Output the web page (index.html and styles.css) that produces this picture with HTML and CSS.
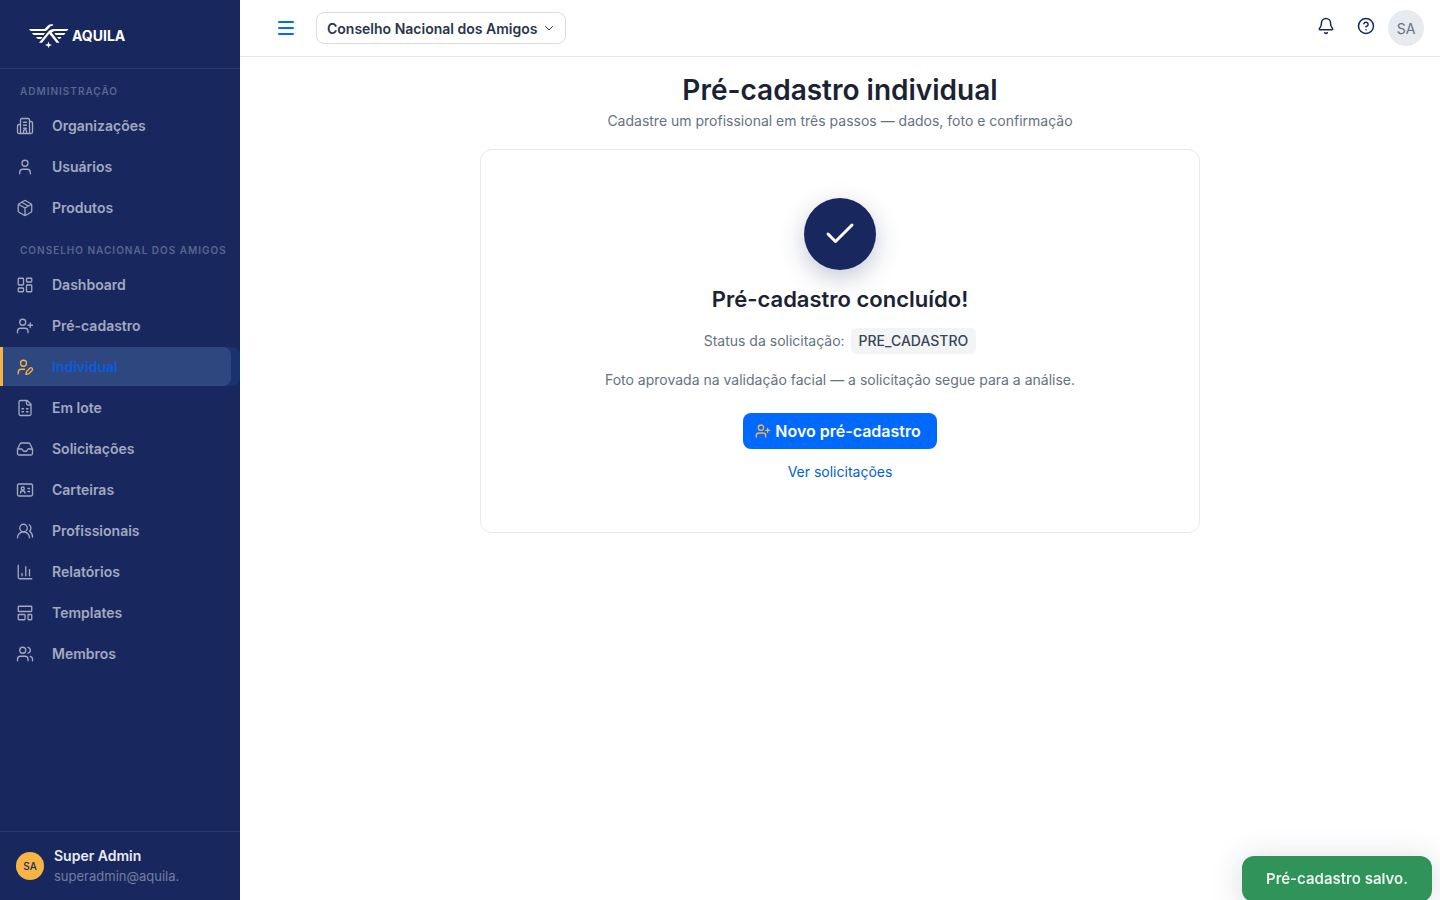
FILE: index.html
```
<!DOCTYPE html>
<html lang="pt-BR">
<head>
  <meta charset="UTF-8">
  <meta name="viewport" content="width=device-width, initial-scale=1.0">
  <title>Pré-cadastro individual - Aquila</title>
  <link rel="stylesheet" href="styles.css">
</head>
<body>
  <aside class="sidebar">
    <a class="brand" href="#">
      <svg class="brand-mark" viewBox="0 0 40 24" fill="currentColor" aria-hidden="true">
        <path d="M0 5h15.500L19 1.500Q20.500.2 22.500.2h1.800l-1 1.800h-1.500l-3.500 4-1.500 1H2Q.8 6.600 0 5z"/>
        <path d="M39.500 5H25q-3 0-5 1.800L10 18.800h3l7.300-9 7.200 9h3L22.600 8.600Q24 7 26 7h11.500q1.200-.4 2-2z"/>
        <path d="M3 9h13l-1.500 2H5Q3.600 10.600 3 9zM36.500 9H25.300l1.500 2h7.700q1.400-.4 2-2zM7 13h6.500L12 15H9q-1.400-.4-2-2zM32.500 13h-4.300l1.500 2h.8q1.400-.4 2-2z"/>
        <path d="M19.500 17.500l.9 2.600 2.600.9-2.600.9-.9 2.100-.9-2.100L16 21l2.600-.9z"/>
      </svg>
      <span class="brand-name">AQUILA</span>
    </a>

    <nav class="menu">
      <h2 class="menu-title">Administração</h2>
      <a class="menu-item" href="#">
        <svg class="icon" viewBox="0 0 24 24"><path d="M6 22V4a2 2 0 0 1 2-2h8a2 2 0 0 1 2 2v18M6 10H4a2 2 0 0 0-2 2v8a2 2 0 0 0 2 2h16a2 2 0 0 0 2-2V8a2 2 0 0 0-2-2h-2M10 22v-3a2 2 0 0 1 4 0v3M10 7h4M10 11h4M10 15h4"/></svg>
        <span>Organizações</span>
      </a>
      <a class="menu-item" href="#">
        <svg class="icon" viewBox="0 0 24 24"><circle cx="12" cy="7" r="4"/><path d="M19 21v-2a4 4 0 0 0-4-4H9a4 4 0 0 0-4 4v2"/></svg>
        <span>Usuários</span>
      </a>
      <a class="menu-item" href="#">
        <svg class="icon" viewBox="0 0 24 24"><path d="M11 21.700a2 2 0 0 0 2 0l7-4a2 2 0 0 0 1-1.700V8a2 2 0 0 0-1-1.700l-7-4a2 2 0 0 0-2 0l-7 4A2 2 0 0 0 3 8v8a2 2 0 0 0 1 1.700zM12 22V12M3.300 7l8.700 5 8.700-5M7.500 4.300l9 5.100"/></svg>
        <span>Produtos</span>
      </a>

      <h2 class="menu-title">Conselho Nacional dos Amigos</h2>
      <a class="menu-item" href="#">
        <svg class="icon" viewBox="0 0 24 24"><rect x="3" y="3" width="7" height="9" rx="1"/><rect x="14" y="3" width="7" height="5" rx="1"/><rect x="14" y="12" width="7" height="9" rx="1"/><rect x="3" y="16" width="7" height="5" rx="1"/></svg>
        <span>Dashboard</span>
      </a>
      <a class="menu-item" href="#">
        <svg class="icon" viewBox="0 0 24 24"><circle cx="9" cy="7" r="4"/><path d="M16 21v-2a4 4 0 0 0-4-4H6a4 4 0 0 0-4 4v2M19 8v6M22 11h-6"/></svg>
        <span>Pré-cadastro</span>
        <svg class="icon chevron" viewBox="0 0 24 24"><path d="M6 9l6 6 6-6"/></svg>
      </a>
      <div class="menu-active">
        <a class="menu-item active" href="#" aria-current="page">
          <svg class="icon" viewBox="0 0 24 24"><circle cx="10" cy="7" r="4"/><path d="M11.500 15H7a4 4 0 0 0-4 4v2M21.400 16.600a1 1 0 0 0-3-3l-4 4a2 2 0 0 0-.5.900l-.8 2.800a.5.5 0 0 0 .6.600l2.800-.8a2 2 0 0 0 .9-.5z"/></svg>
          <span>Individual</span>
        </a>
      </div>
      <a class="menu-item" href="#">
        <svg class="icon" viewBox="0 0 24 24"><path d="M15 2H6a2 2 0 0 0-2 2v16a2 2 0 0 0 2 2h12a2 2 0 0 0 2-2V7zM14 2v4a2 2 0 0 0 2 2h4M8 13h2M14 13h2M8 17h2M14 17h2"/></svg>
        <span>Em lote</span>
      </a>
      <a class="menu-item" href="#">
        <svg class="icon" viewBox="0 0 24 24"><path d="M22 12h-6l-2 3h-4l-2-3H2M5.500 5.100L2 12v6a2 2 0 0 0 2 2h16a2 2 0 0 0 2-2v-6l-3.500-6.900A2 2 0 0 0 16.800 4H7.200a2 2 0 0 0-1.700 1.100z"/></svg>
        <span>Solicitações</span>
      </a>
      <a class="menu-item" href="#">
        <svg class="icon" viewBox="0 0 24 24"><rect x="2" y="4" width="20" height="16" rx="2"/><circle cx="9" cy="10" r="2"/><path d="M16 10h2M16 14h2M6 16a3 3 0 0 1 6 0"/></svg>
        <span>Carteiras</span>
      </a>
      <a class="menu-item" href="#">
        <svg class="icon" viewBox="0 0 24 24"><path d="M18 21a8 8 0 0 0-16 0M22 20c0-3.400-2-6.500-4-8a5 5 0 0 0-.500-8.300"/><circle cx="10" cy="8" r="5"/></svg>
        <span>Profissionais</span>
      </a>
      <a class="menu-item" href="#">
        <svg class="icon" viewBox="0 0 24 24"><path d="M3 3v16a2 2 0 0 0 2 2h16M18 17V9M13 17V5M8 17v-3"/></svg>
        <span>Relatórios</span>
      </a>
      <a class="menu-item" href="#">
        <svg class="icon" viewBox="0 0 24 24"><rect x="3" y="3" width="18" height="7" rx="1"/><rect x="3" y="14" width="9" height="7" rx="1"/><rect x="16" y="14" width="5" height="7" rx="1"/></svg>
        <span>Templates</span>
      </a>
      <a class="menu-item" href="#">
        <svg class="icon" viewBox="0 0 24 24"><circle cx="9" cy="7" r="4"/><path d="M16 21v-2a4 4 0 0 0-4-4H6a4 4 0 0 0-4 4v2M22 21v-2a4 4 0 0 0-3-3.900M16 3.100a4 4 0 0 1 0 7.800"/></svg>
        <span>Membros</span>
      </a>
    </nav>

    <div class="account">
      <span class="account-avatar">SA</span>
      <div class="account-info">
        <strong class="account-name">Super Admin</strong>
        <span class="account-mail">superadmin@aquila.</span>
      </div>
    </div>
  </aside>

  <div class="page">
    <header class="topbar">
      <button class="icon-button toggle" type="button" aria-label="Alternar menu">
        <svg class="icon" viewBox="0 0 18 18"><path d="M2 3h14M2 9h14M2 15h14"/></svg>
      </button>
      <button class="org-button" type="button">
        Conselho Nacional dos Amigos
        <svg class="icon" viewBox="0 0 24 24"><path d="M5 9l7 7 7-7"/></svg>
      </button>
      <div class="topbar-actions">
        <button class="icon-button" type="button" aria-label="Notificações">
          <svg class="icon" viewBox="0 0 24 24"><path d="M10.300 21a2 2 0 0 0 3.400 0M3.300 15.300A1 1 0 0 0 4 17h16a1 1 0 0 0 .700-1.700C19.400 14 18 12.500 18 8A6 6 0 0 0 6 8c0 4.500-1.400 6-2.700 7.300z"/></svg>
        </button>
        <button class="icon-button" type="button" aria-label="Ajuda">
          <svg class="icon" viewBox="0 0 24 24"><circle cx="12" cy="12" r="10"/><path d="M9.100 9a3 3 0 0 1 5.800 1c0 2-3 3-3 3M12 17h.01"/></svg>
        </button>
        <button class="user-button" type="button">SA</button>
      </div>
    </header>

    <main class="content">
      <h1>Pré-cadastro individual</h1>
      <p class="subtitle">Cadastre um profissional em três passos — dados, foto e confirmação</p>

      <section class="card">
        <div class="success">
          <svg class="icon" viewBox="0 0 24 24"><path d="M20 6L9 17l-5-5"/></svg>
        </div>
        <h2>Pré-cadastro concluído!</h2>
        <p class="status">Status da solicitação: <span class="tag">PRE_CADASTRO</span></p>
        <p class="message">Foto aprovada na validação facial — a solicitação segue para a análise.</p>
        <button class="primary" type="button">
          <svg class="icon" viewBox="0 0 24 24"><circle cx="9" cy="7" r="4"/><path d="M16 21v-2a4 4 0 0 0-4-4H6a4 4 0 0 0-4 4v2M19 8v6M22 11h-6"/></svg>
          Novo pré-cadastro
        </button>
        <a class="link" href="#">Ver solicitações</a>
      </section>
    </main>
  </div>

  <div class="toast" role="status">Pré-cadastro salvo.</div>
</body>
</html>
```
FILE: styles.css
```
* {
  box-sizing: border-box;
}

body {
  margin: 0;
  min-height: 100vh;
  display: flex;
  font-family: Inter, "Open Sans", sans-serif;
  font-size: 14px;
  line-height: 20px;
  color: #1a2233;
  background-color: #fff;
}

h1, h2, p {
  margin: 0;
}

a {
  text-decoration: none;
}

button {
  font-family: inherit;
  cursor: pointer;
}

.icon {
  width: 18px;
  height: 18px;
  flex: none;
  fill: none;
  stroke: currentColor;
  stroke-width: 1.75;
  stroke-linecap: round;
  stroke-linejoin: round;
}

/* Menu lateral */
.sidebar {
  width: 240px;
  flex: none;
  min-height: 100vh;
  display: flex;
  flex-direction: column;
  background-color: #18285f;
}

.brand {
  height: 69px;
  display: flex;
  align-items: center;
  gap: 3px;
  padding: 3px 29px 0;
  color: #fff;
  border-bottom: 1px solid #293970;
}

.brand-mark {
  width: 40px;
  height: 24px;
}

.brand-name {
  font-size: 14px;
  font-weight: 700;
}

.menu {
  flex: 1;
  padding-top: 12px;
}

.menu-title {
  padding: 0 20px;
  margin-bottom: 5px;
  font-size: 10px;
  line-height: 20px;
  font-weight: 600;
  letter-spacing: 1px;
  text-transform: uppercase;
  white-space: nowrap;
  color: #58658f;
}

.menu-item + .menu-title {
  margin-top: 13px;
}

.menu-item {
  height: 39px;
  display: flex;
  align-items: center;
  gap: 18px;
  margin-bottom: 2px;
  padding: 0 13px 0 16px;
  font-weight: 600;
  color: #a3a9bf;
}

.chevron {
  width: 14px;
  height: 14px;
  margin-left: auto;
  color: #182c50;
}

.menu-active {
  margin-bottom: 2px;
  border-radius: 0 8px 8px 0;
  background-color: #1a3370;
}

.menu-item.active {
  margin: 0 9px 0 0;
  padding-left: 13px;
  border-left: 3px solid #f5b546;
  border-radius: 0 8px 8px 0;
  background-color: #2f477f;
  color: #0b5bdb;
}

.active .icon {
  color: #f5b546;
}

.account {
  height: 69px;
  display: flex;
  align-items: center;
  gap: 10px;
  padding: 0 16px;
  border-top: 1px solid #293970;
}

.account-avatar {
  width: 28px;
  height: 28px;
  display: flex;
  align-items: center;
  justify-content: center;
  border-radius: 50%;
  font-size: 10px;
  font-weight: 500;
  color: #18285f;
  background-color: #f5b546;
}

.account-info {
  display: flex;
  flex-direction: column;
}

.account-name {
  font-weight: 600;
  color: #e8eaef;
}

.account-mail {
  font-size: 13px;
  color: #747e9f;
}

/* Barra superior */
.page {
  flex: 1;
  min-width: 0;
}

.topbar {
  height: 57px;
  display: flex;
  align-items: center;
  padding: 0 16px 0 32px;
  border-bottom: 1px solid #e4e5e9;
}

.icon-button {
  width: 28px;
  height: 28px;
  display: flex;
  align-items: center;
  justify-content: center;
  padding: 0;
  border: none;
  background: none;
  color: #18285f;
}

.toggle {
  color: #0069ff;
}

.toggle .icon,
.topbar-actions .icon {
  stroke-width: 2;
}

.org-button {
  height: 32px;
  display: flex;
  align-items: center;
  gap: 6px;
  margin-left: 16px;
  padding: 0 10px;
  border: 1px solid #d9dce2;
  border-radius: 8px;
  font-size: 14px;
  font-weight: 600;
  color: #29364a;
  background-color: #fff;
}

.org-button .icon {
  width: 12px;
  height: 12px;
  stroke-width: 2;
}

.topbar-actions {
  display: flex;
  align-items: center;
  gap: 12px;
  margin-left: auto;
}

.topbar-actions .icon-button {
  padding-bottom: 4px;
}

.user-button {
  width: 36px;
  height: 36px;
  margin-left: -4px;
  padding: 0;
  border: none;
  border-radius: 50%;
  font-size: 14px;
  color: #65717e;
  background-color: #e7eaee;
}

/* Conteúdo */
.content {
  max-width: 720px;
  margin: 0 auto;
  padding-top: 16px;
  text-align: center;
}

h1 {
  font-size: 28px;
  line-height: 34px;
  font-weight: 600;
}

.subtitle {
  margin-top: 4px;
  color: #667280;
}

.card {
  display: flex;
  flex-direction: column;
  align-items: center;
  margin-top: 18px;
  padding: 48px 24px 50px;
  border: 1px solid #e7e9ed;
  border-radius: 12px;
}

.success {
  width: 72px;
  height: 72px;
  display: flex;
  align-items: center;
  justify-content: center;
  border-radius: 50%;
  color: #fff;
  background-color: #18285f;
  box-shadow: 0 8px 24px rgba(24, 40, 95, 0.25);
}

.success .icon {
  width: 36px;
  height: 36px;
  stroke-width: 2;
}

.card h2 {
  margin-top: 14px;
  font-size: 22px;
  line-height: 30px;
  font-weight: 600;
}

.status {
  margin-top: 14px;
  line-height: 26px;
  color: #667280;
}

.tag {
  display: inline-block;
  margin-left: 2px;
  padding: 0 8px;
  border-radius: 6px;
  font-weight: 500;
  color: #384656;
  background-color: #f3f4f6;
}

.message {
  margin-top: 16px;
  color: #667280;
}

.primary {
  height: 36px;
  display: flex;
  align-items: center;
  gap: 4px;
  margin-top: 23px;
  padding: 0 16px 0 12px;
  border: none;
  border-radius: 8px;
  font-size: 16px;
  font-weight: 600;
  color: #fff;
  background-color: #0069ff;
}

.primary .icon {
  width: 16px;
  height: 16px;
  stroke-width: 2;
  color: #f5b546;
}

.link {
  margin-top: 13px;
  color: #0062d1;
}

.toast {
  position: fixed;
  right: 8px;
  bottom: -2px;
  padding: 12px 24px;
  border-radius: 12px;
  font-size: 15px;
  line-height: 22px;
  font-weight: 600;
  color: #eaf4ee;
  background-color: #30935a;
  box-shadow: 0 4px 32px rgba(24, 40, 95, 0.18);
}
```
